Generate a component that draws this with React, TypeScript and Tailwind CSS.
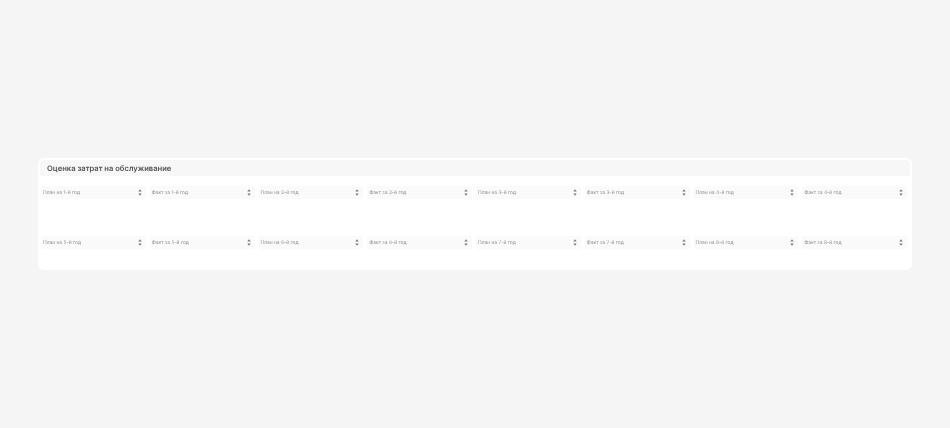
const years = [
  ["План на 1-й год", "Факт за 1-й год", "План на 2-й год", "Факт за 2-й год", "План на 3-й год", "Факт за 3-й год", "План на 4-й год", "Факт за 4-й год"],
  ["План на 5-й год", "Факт за 5-й год", "План на 6-й год", "Факт за 6-й год", "План на 7-й год", "Факт за 7-й год", "План на 8-й год", "Факт за 8-й год"],
]

function SortIcon() {
  return (
    <svg width="4" height="7" viewBox="0 0 4 7" className="shrink-0 text-[#777777]" fill="currentColor">
      <path d="M2 0.3 L3.7 2.6 H0.3 Z" />
      <path d="M2 6.7 L3.7 4.4 H0.3 Z" />
    </svg>
  )
}

function HeaderCell({ label }: { label: string }) {
  return (
    <div className="flex h-[13px] items-center justify-between rounded-[2px] bg-[#fafafa] pl-[2px] pr-[4px]">
      <span className="mt-[2.5px] text-[4.9px] leading-none text-[#8f8f8f]">{label}</span>
      <SortIcon />
    </div>
  )
}

export default function App() {
  return (
    <div className="flex h-[428px] w-[950px] items-center justify-center bg-[#f5f5f5] font-['Inter',sans-serif] [text-rendering:geometricPrecision]">
      <div className="flex h-[112px] w-[874px] flex-col rounded-[6px] border-2 border-white bg-white blur-[0.5px]">
        {/* Title bar */}
        <div className="flex h-4 items-center rounded-t-[4px] bg-[#f7f7f7] px-[7px] pt-[1px]">
          <h2 className="text-[7.6px] font-semibold leading-none text-[#555555]">Оценка затрат на обслуживание</h2>
        </div>

        {/* Year columns */}
        <div className="flex flex-col gap-[37px] pl-[1px] pr-[3px] pt-[10px]">
          {years.map((row, i) => (
            <div key={i} className="grid grid-cols-8 gap-1">
              {row.map((label) => (
                <HeaderCell key={label} label={label} />
              ))}
            </div>
          ))}
        </div>
      </div>
    </div>
  )
}
